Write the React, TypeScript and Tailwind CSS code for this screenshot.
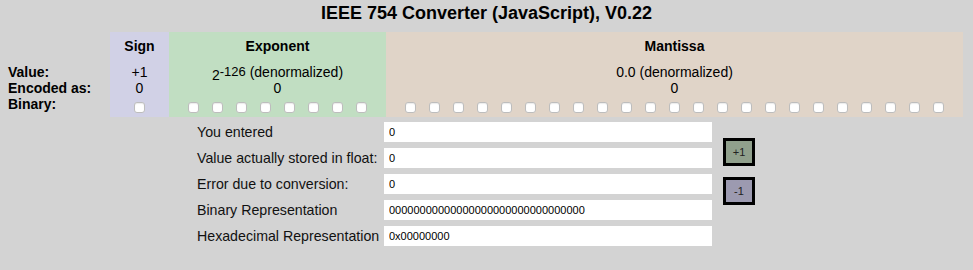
import React from 'react'

const Box = () => (
    <input
        type="checkbox"
        readOnly
        className="appearance-none w-[11px] h-[11px] bg-white rounded-[3px] border border-[#bdbdbd] shadow-[inset_0_1px_1px_rgba(0,0,0,0.08)]"
    />
)

const Cells = ({count}: {count: number}) => (
    <div className="flex justify-center">
        {Array.from({length: count}).map((_, i) => (
            <div key={i} className="w-[24px] flex justify-center">
                <Box/>
            </div>
        ))}
    </div>
)

const fields = [
    {label: 'You entered', value: '0'},
    {label: 'Value actually stored in float:', value: '0'},
    {label: 'Error due to conversion:', value: '0'},
    {label: 'Binary Representation', value: '00000000000000000000000000000000'},
    {label: 'Hexadecimal Representation', value: '0x00000000'},
]

const App = () => {
    return (
        <div className="w-full h-[270px] bg-[#d3d3d3] text-black font-['Liberation_Sans',Arial,sans-serif]">
            {/* title */}
            <div className="h-8 pt-[2px] text-center text-[18px] font-bold leading-[22px]">
                IEEE 754 Converter (JavaScript), V0.22
            </div>

            {/* bit table */}
            <div className="flex ml-2 w-[955px] text-[14px]">
                {/* row labels */}
                <div className="w-[102px] flex flex-col font-bold">
                    <div className="h-[32px]"/>
                    <div className="h-4 leading-4">Value:</div>
                    <div className="h-4 leading-4">Encoded as:</div>
                    <div className="h-[21px] leading-4">Binary:</div>
                </div>

                {/* sign */}
                <div className="w-[59px] bg-[#d1d1e6] flex flex-col text-center">
                    <div className="h-[32px] pt-[6px] leading-4 font-bold">Sign</div>
                    <div className="h-4 leading-4">+1</div>
                    <div className="h-4 leading-4">0</div>
                    <div className="h-[21px] pt-[6px] flex justify-center"><Box/></div>
                </div>

                {/* exponent */}
                <div className="w-[217px] bg-[#c1dec2] flex flex-col text-center">
                    <div className="h-[32px] pt-[6px] leading-4 font-bold">Exponent</div>
                    <div className="h-4 leading-4 whitespace-nowrap">
                        <span className="relative top-[3px]">2</span>
                        <span className="relative -top-[1px] text-[13px]">-126</span> (denormalized)
                    </div>
                    <div className="h-4 leading-4">0</div>
                    <div className="h-[21px] pt-[6px]"><Cells count={8}/></div>
                </div>

                {/* mantissa */}
                <div className="w-[577px] bg-[#e0d4c8] flex flex-col text-center">
                    <div className="h-[32px] pt-[6px] leading-4 font-bold">Mantissa</div>
                    <div className="h-4 leading-4">0.0 (denormalized)</div>
                    <div className="h-4 leading-4">0</div>
                    <div className="h-[21px] pt-[6px]"><Cells count={23}/></div>
                </div>
            </div>

            {/* details */}
            <div className="flex mt-[5px] pl-[197px]">
                <div className="flex flex-col gap-[6px]">
                    {fields.map(f => (
                        <div key={f.label} className="flex items-center h-5">
                            <div className="w-[187px] text-[14.2px] leading-5 text-[#111] whitespace-nowrap">{f.label}</div>
                            <input
                                readOnly
                                value={f.value}
                                className="w-[328px] h-5 bg-white border-0 outline-none pl-[5px] text-[11px] text-black"
                            />
                        </div>
                    ))}
                </div>
                <div className="ml-[11px] pt-4 flex flex-col gap-[11px]">
                    <button className="w-8 h-7 border-[3px] border-black bg-[#90a08c] text-[11px] text-[#222]">+1</button>
                    <button className="w-8 h-7 border-[3px] border-black bg-[#9c9ab0] text-[11px] text-[#222]">-1</button>
                </div>
            </div>
        </div>
    )
}

export default App
